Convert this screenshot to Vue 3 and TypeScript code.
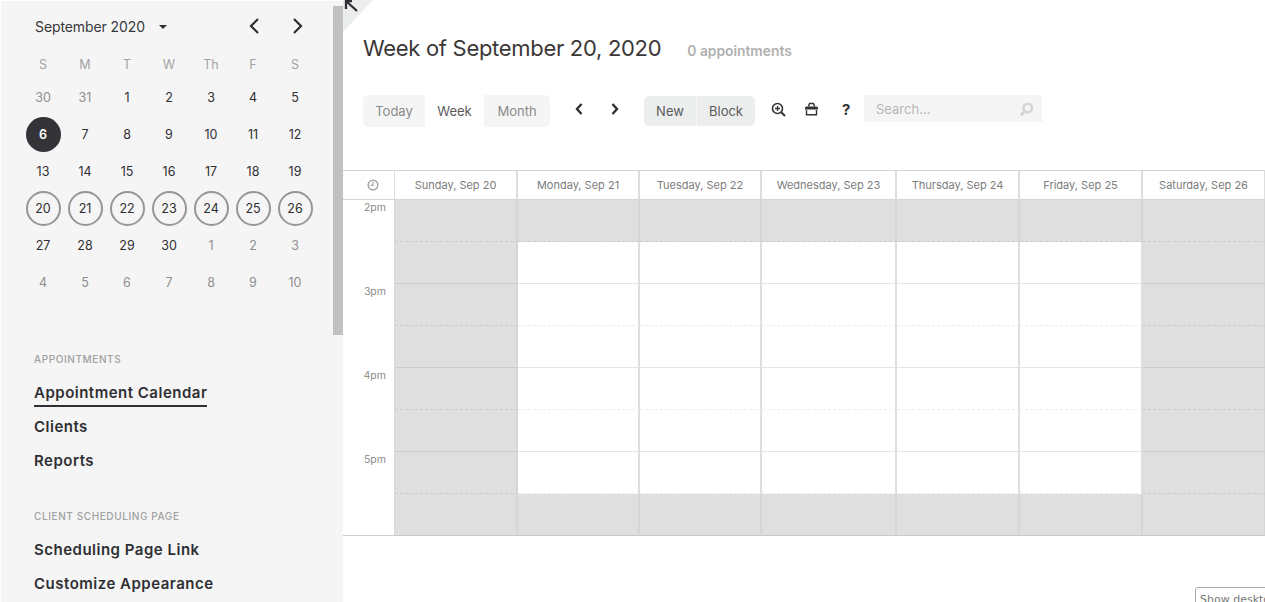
<script setup lang="ts">
const weekdays = ['S', 'M', 'T', 'W', 'Th', 'F', 'S'];

interface CalDay {
  label: number;
  muted?: boolean;
  selected?: boolean;
  inWeek?: boolean;
}

const toDays = (labels: number[], muted: number[] = [], inWeek = false): CalDay[] =>
  labels.map((label, i) => ({ label, muted: muted.includes(i), inWeek, selected: false }));

const calWeeks: CalDay[][] = [
  toDays([30, 31, 1, 2, 3, 4, 5], [0, 1]),
  [{ label: 6, selected: true }, ...toDays([7, 8, 9, 10, 11, 12])],
  toDays([13, 14, 15, 16, 17, 18, 19]),
  toDays([20, 21, 22, 23, 24, 25, 26], [], true),
  toDays([27, 28, 29, 30, 1, 2, 3], [4, 5, 6]),
  toDays([4, 5, 6, 7, 8, 9, 10], [0, 1, 2, 3, 4, 5, 6]),
];

const columns = [
  'Sunday, Sep 20',
  'Monday, Sep 21',
  'Tuesday, Sep 22',
  'Wednesday, Sep 23',
  'Thursday, Sep 24',
  'Friday, Sep 25',
  'Saturday, Sep 26',
];

const hours: Record<number, string> = { 0: '2pm', 2: '3pm', 4: '4pm', 6: '5pm' };
const slots = [0, 1, 2, 3, 4, 5, 6, 7];

const isClosed = (col: number, slot: number) =>
  col === 0 || col === 6 || slot === 0 || slot === 7;
</script>

<template>
  <div class="page">
    <aside class="sidebar">
      <div class="cal-head">
        <span class="cal-title">September 2020</span>
        <span class="caret"></span>
        <svg class="cal-prev" width="14" height="18" viewBox="0 0 14 18"><path d="M11 2 4 9l7 7" fill="none" stroke="#2f2f33" stroke-width="2.2" /></svg>
        <svg class="cal-next" width="14" height="18" viewBox="0 0 14 18"><path d="m3 2 7 7-7 7" fill="none" stroke="#2f2f33" stroke-width="2.2" /></svg>
      </div>
      <div class="cal-grid cal-weekdays">
        <span v-for="(d, i) in weekdays" :key="i">{{ d }}</span>
      </div>
      <div v-for="(week, w) in calWeeks" :key="w" class="cal-grid cal-week">
        <span
          v-for="(day, i) in week"
          :key="i"
          class="day"
          :class="{ muted: day.muted, selected: day.selected, 'in-week': day.inWeek }"
        >{{ day.label }}</span>
      </div>

      <h4 class="nav-title first">APPOINTMENTS</h4>
      <nav class="nav">
        <a class="active">Appointment Calendar</a>
        <a>Clients</a>
        <a>Reports</a>
      </nav>
      <h4 class="nav-title second">CLIENT SCHEDULING PAGE</h4>
      <nav class="nav">
        <a>Scheduling Page Link</a>
        <a>Customize Appearance</a>
      </nav>
      <div class="scroll-thumb"></div>
    </aside>

    <main class="main">
      <div class="corner"></div>
      <svg class="corner-arrow" width="15" height="13" viewBox="0 0 15 13"><path d="M2 0v9M1 1h7M2 1l11 10" fill="none" stroke="#2f2f33" stroke-width="2.3" /></svg>

      <header class="title-row">
        <h1>Week of September 20, 2020</h1>
        <span class="count">0 appointments</span>
      </header>

      <div class="toolbar">
        <div class="seg view-seg">
          <span>Today</span>
          <span class="current">Week</span>
          <span>Month</span>
        </div>
        <div class="arrows">
          <svg width="10" height="14" viewBox="0 0 10 14"><path d="M7.5 2 3 7l4.500 5" fill="none" stroke="#2f2f33" stroke-width="2.4" /></svg>
          <svg width="10" height="14" viewBox="0 0 10 14"><path d="m2.500 2 4.500 5-4.500 5" fill="none" stroke="#2f2f33" stroke-width="2.4" /></svg>
        </div>
        <div class="seg action-seg">
          <span>New</span>
          <span>Block</span>
        </div>
        <div class="tools">
          <svg width="15" height="15" viewBox="0 0 15 15"><circle cx="6.500" cy="6.500" r="5" fill="none" stroke="#333" stroke-width="1.6" /><path d="m10 10 4 4" stroke="#333" stroke-width="2" /><path d="M4 6.500h5M6.500 4v5" stroke="#333" stroke-width="1.3" /></svg>
          <svg width="15" height="14" viewBox="0 0 15 14"><path d="M4.500 4.500 5.500 1.500h4l1 3" fill="none" stroke="#333" stroke-width="1.4" /><path d="M1 6q0-1.500 1.500-1.500h10q1.500 0 1.500 1.500v1.500H1z" fill="#333" /><path d="M2.500 8v4.700h10V8" fill="none" stroke="#333" stroke-width="1.4" /></svg>
          <span class="help">?</span>
        </div>
        <div class="search">
          <span>Search...</span>
          <svg width="15" height="15" viewBox="0 0 15 15"><circle cx="8.700" cy="6" r="4.300" fill="none" stroke="#d5d5d5" stroke-width="2.400" /><path d="M5.500 9.500 1.800 13.200" stroke="#d5d5d5" stroke-width="2.800" /></svg>
        </div>
      </div>

      <section class="schedule">
        <div class="head-cell clock">
          <svg width="12" height="12" viewBox="0 0 12 12"><circle cx="6" cy="6" r="4.800" fill="none" stroke="#a5a5a5" stroke-width="1.500" /><path d="M6 3v3.300H3.500" fill="none" stroke="#a5a5a5" stroke-width="1.200" /></svg>
        </div>
        <div v-for="c in columns" :key="c" class="head-cell">{{ c }}</div>

        <template v-for="slot in slots" :key="slot">
          <div class="time-cell" :class="{ end: slot === 7 }">{{ hours[slot] }}</div>
          <div
            v-for="(c, col) in columns"
            :key="c"
            class="slot"
            :class="{ closed: isClosed(col, slot), half: slot % 2 === 0, end: slot === 7 }"
          ></div>
        </template>
      </section>

      <button class="desktop-btn">Show desktop site</button>
    </main>
  </div>
</template>

<style scoped>
.page {
  display: flex;
  width: 1265px;
  height: 602px;
  overflow: hidden;
  background: #fff;
  font-family: Inter, "Liberation Sans", sans-serif;
  color: #2f2f33;
}

.sidebar {
  position: relative;
  flex: 0 0 342px;
  height: 601px;
  margin: 1px 0 0 1px;
  padding: 0 0 0 21px;
  box-sizing: border-box;
  background: #f5f5f5;
  overflow: hidden;
}

.scroll-thumb {
  position: absolute;
  top: 5px;
  right: 0;
  width: 10px;
  height: 329px;
  background: #c1c1c1;
}

.cal-head {
  display: flex;
  align-items: center;
  height: 26px;
  margin-top: 12px;
  padding-left: 13px;
}

.cal-title {
  font-size: 14px;
  letter-spacing: -0.1px;
  color: #38383c;
}

.caret {
  margin: 1px 0 0 14px;
  border-left: 4px solid transparent;
  border-right: 4px solid transparent;
  border-top: 4px solid #2f2f33;
}

.cal-prev {
  margin-left: 80px;
}

.cal-next {
  margin-left: 30px;
}

.cal-grid {
  display: grid;
  grid-template-columns: repeat(7, 42px);
  justify-items: center;
  align-items: center;
  font-size: 12.500px;
}

.cal-weekdays {
  height: 24px;
  margin-top: 13px;
  margin-bottom: 3px;
  color: #a3a3a3;
}

.cal-week {
  height: 37px;
}

.day {
  display: flex;
  align-items: center;
  justify-content: center;
  width: 35px;
  height: 35px;
  box-sizing: border-box;
  border-radius: 50%;
}

.muted {
  color: #8f8f8f;
}

.selected {
  background: #333338;
  color: #fff;
  font-weight: 600;
}

.in-week {
  border: 2px solid #969696;
}

.nav-title {
  margin: 0;
  font-size: 10px;
  font-weight: 500;
  letter-spacing: 0.6px;
  color: #a0a0a0;
  padding-left: 12px;
}

.nav-title.first {
  margin-top: 52px;
}

.nav-title.second {
  margin-top: 32px;
}

.nav {
  display: flex;
  flex-direction: column;
  align-items: flex-start;
  padding-left: 12px;
  margin-top: 11px;
}

.nav a {
  height: 34px;
  line-height: 34px;
  font-size: 15px;
  font-weight: 600;
  letter-spacing: 0.5px;
  color: #2f2f33;
  box-sizing: border-box;
}

.nav a.active {
  line-height: 28px;
  height: 28px;
  margin: 3px 0 3px;
  border-bottom: 2px solid #2f2f33;
}

.main {
  position: relative;
  flex: 1;
  min-width: 0;
}

.corner {
  position: absolute;
  top: 0;
  left: 0;
  width: 30px;
  height: 32px;
  background: #eceeee;
  clip-path: polygon(0 0, 100% 0, 0 100%);
}

.corner-arrow {
  position: absolute;
  top: 0;
  left: 1px;
}

.title-row {
  display: flex;
  align-items: baseline;
  padding: 34px 0 0 20px;
}

.title-row h1 {
  margin: 0;
  font-size: 22px;
  font-weight: 400;
  letter-spacing: -0.3px;
  line-height: 28px;
  color: #3b3738;
}

.count {
  margin-left: 26px;
  font-size: 13.800px;
  font-weight: 600;
  color: #b0b0b0;
}

.toolbar {
  display: flex;
  align-items: center;
  height: 32px;
  margin-top: 33px;
  padding-left: 20px;
  font-size: 13px;
}

.seg {
  display: flex;
  height: 32px;
  border-radius: 5px;
  overflow: hidden;
  color: #8a8a8a;
  background: #f5f5f5;
}

.seg span {
  display: flex;
  align-items: center;
  justify-content: center;
}

.view-seg span:nth-child(1) {
  width: 62px;
}

.view-seg span:nth-child(2) {
  width: 59px;
}

.view-seg span:nth-child(3) {
  width: 66px;
}

.view-seg .current {
  background: #fff;
  color: #5a5a5a;
}

.arrows {
  display: flex;
  gap: 26px;
  margin-left: 24px;
  margin-top: -5px;
}

.action-seg {
  height: 30px;
  margin-left: 24px;
  background: #eceeee;
  color: #5a5a5a;
}

.action-seg span:nth-child(1) {
  width: 52px;
  border-right: 1px solid #f8f8f8;
}

.action-seg span:nth-child(2) {
  width: 58px;
}

.tools {
  display: flex;
  align-items: center;
  margin-left: 16px;
  gap: 18px;
  margin-top: -4px;
}

.help {
  width: 10px;
  margin-left: 5px;
  font-size: 15px;
  font-weight: 700;
  color: #333;
}

.search {
  display: flex;
  align-items: center;
  justify-content: space-between;
  width: 178px;
  height: 27px;
  margin: -6px 0 0 12px;
  padding: 1px 8px 0 12px;
  box-sizing: border-box;
  background: #f5f5f5;
  color: #b5b5b5;
}

.search svg {
  margin-top: 2px;
}

.schedule {
  display: grid;
  grid-template-columns: 52px 123px 122px 122px 135px 123px 123px 123px;
  grid-template-rows: 30px repeat(8, 42px);
  margin-top: 43px;
}

.head-cell {
  display: flex;
  align-items: center;
  justify-content: center;
  box-sizing: border-box;
  border-top: 1px solid #d4d4d4;
  border-bottom: 1px solid #d4d4d4;
  border-right: 2px solid #dedede;
  font-size: 11px;
  color: #7c7c7c;
}

.clock {
  padding-left: 8px;
  border-right-width: 1px;
}

.time-cell {
  box-sizing: border-box;
  padding: 1px 8px 0 0;
  border-right: 1px solid #d8d8d8;
  text-align: right;
  font-size: 10.500px;
  color: #8a8a8a;
}

.time-cell.end {
  border-bottom: 1px solid #cfcfcf;
}

.slot {
  box-sizing: border-box;
  border-right: 2px solid #dedede;
  border-bottom: 1px dashed #ececec;
}

.slot:not(.half) {
  border-bottom: 1px solid #e4e4e4;
}

.slot.half {
  border-bottom-style: dashed;
}

.slot.closed {
  background: #dfdfdf;
  border-right-color: #d6d6d6;
  border-bottom-color: #cbcbcb;
}

.slot.end {
  border-bottom-color: #c8c8c8;
}

.desktop-btn {
  position: absolute;
  top: 587px;
  left: 852px;
  width: 90px;
  height: 24px;
  padding: 0 0 0 4px;
  border: 1px solid #a8a8a8;
  border-radius: 3px;
  background: #fff;
  color: #777;
  text-align: left;
  white-space: nowrap;
  font-family: "DejaVu Sans", sans-serif;
  font-size: 11px;
}
</style>

<style>
html,
body {
  margin: 0;
  overflow: hidden;
  background: #fff;
}
</style>
